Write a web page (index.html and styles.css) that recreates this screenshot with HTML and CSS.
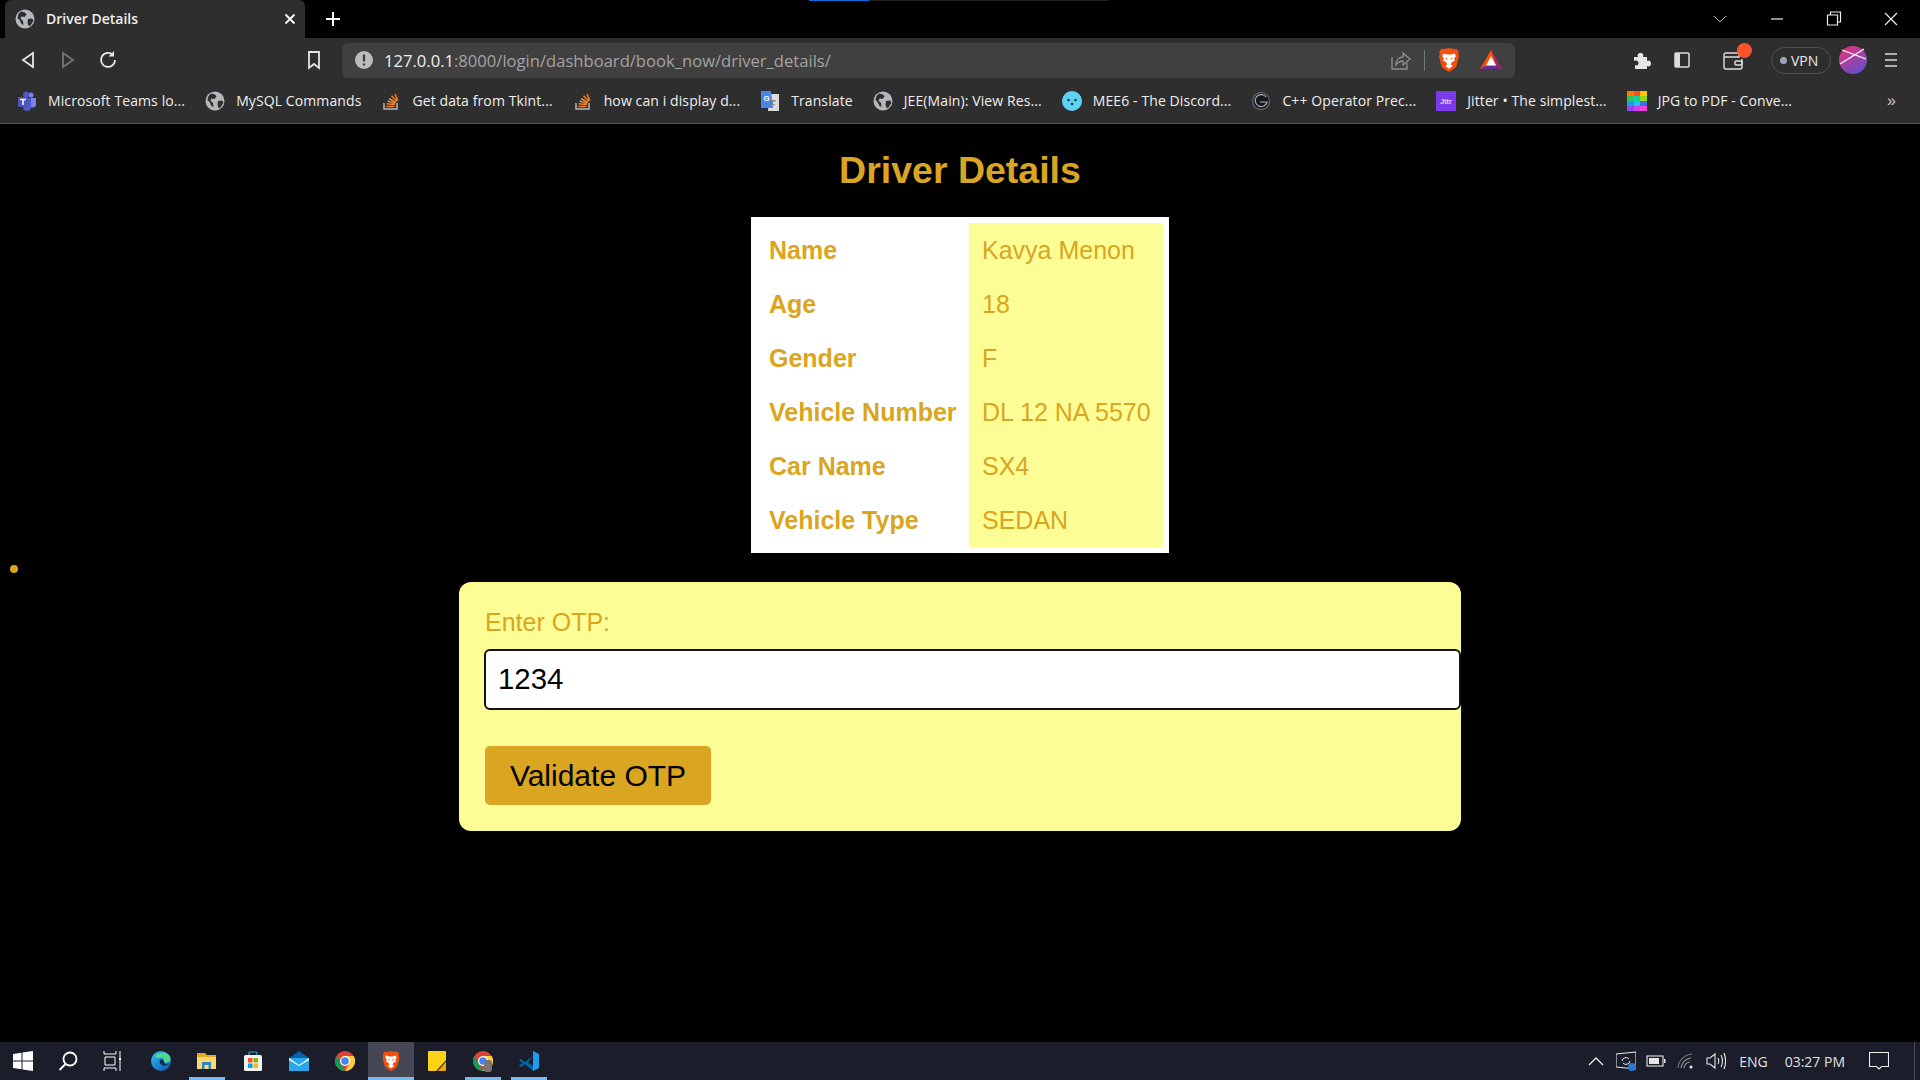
FILE: index.html
```html
<!DOCTYPE html>
<html lang="en">
<head>
    <meta charset="UTF-8">
    <meta name="viewport" content="width=device-width, initial-scale=1.0">
    <title>Driver Details</title>
    <link rel="stylesheet" href="styles.css">
</head>
<body>
    <svg class="defs" width="0" height="0">
        <symbol id="globe" viewBox="0 0 20 20">
            <circle cx="10" cy="10" r="9.5" fill="#b4b7bb"/>
            <path d="M6 2.500l4 1 1.500 2-2 2.500-3-.5-1 2 2.500 2.500.5 4-2-1-2-4-2-2 1-4zM13 10l4-.5 1.500 2-3 5-2 .5-1-3z" fill="#2e2e2e"/>
        </symbol>
        <symbol id="so" viewBox="0 0 20 20">
            <path d="M3 12v6h13v-6" fill="none" stroke="#b8b8b8" stroke-width="1.500"/>
            <path d="M5.500 15.500h8M5.700 12.800l8 .8M6.500 10l7.700 2.200M8 7.500l7 3.800M10.500 4.800l5.500 5.500M14 3l2.800 6.500" fill="none" stroke="#f48024" stroke-width="1.500"/>
        </symbol>
        <symbol id="brave" viewBox="0 0 24 26">
            <path d="M12 0l5 1 3 -.2 3 3.200-1 2 1 3-2.500 9.500c-.5 2-1.500 3-3 4l-4 2.800c-1 .7-2 .7-3 0l-4-2.800c-1.500-1-2.500-2-3-4L1 9l1-3-1-2 3-3.200L7 1z" fill="#f1500f"/>
            <path d="M6 6l4 1h4l4-1 1.500 2.500-2 3 1 2-3.500 2-1 2.500 2 1.500-4 3-4-3 2-1.500-1-2.500-3.500-2 1-2-2-3z" fill="#fff"/>
            <path d="M8 10l2.500 1.500-1 1.500zM16 10l-2.500 1.500 1 1.500z" fill="#f1500f"/>
        </symbol>
        <symbol id="chrome" viewBox="0 0 24 24">
            <circle cx="12" cy="12" r="12" fill="#db4437"/>
            <path d="M12 24A12 12 0 0 1 1.600 6l5.400 9.500 5 8.500z" fill="#0f9d58"/>
            <path d="M12 24a12 12 0 0 0 10.400-18H12l5 9z" fill="#ffcd40"/>
            <circle cx="12" cy="12" r="6" fill="#fff"/>
            <circle cx="12" cy="12" r="4.500" fill="#4285f4"/>
        </symbol>
    </svg>

    <div class="tabstrip">
        <div class="loadbar"><span class="loadbar-done"></span></div>
        <div class="tab">
            <svg class="ico20"><use href="#globe"/></svg>
            <span class="tab-title">Driver Details</span>
            <svg class="tab-close" viewBox="0 0 12 12"><path d="M1.500 1.500l9 9M10.500 1.500l-9 9" stroke="#fff" stroke-width="1.800"/></svg>
        </div>
        <svg class="tab-new" viewBox="0 0 16 16"><path d="M8 1v14M1 8h14" stroke="#fff" stroke-width="2"/></svg>
        <div class="winbtns">
            <svg class="winbtn" viewBox="0 0 46 20"><path d="M17 7l6 6 6-6" fill="none" stroke="#bbb"/></svg>
            <svg class="winbtn" viewBox="0 0 46 20"><path d="M17 10h12" stroke="#eee" stroke-width="1.200"/></svg>
            <svg class="winbtn" viewBox="0 0 46 20"><path d="M16.500 6h10v10h-10zM19.500 6V3h10v10h-3" fill="none" stroke="#eee" stroke-width="1.200"/></svg>
            <svg class="winbtn" viewBox="0 0 46 20"><path d="M17 4l12 12M29 4L17 16" stroke="#eee" stroke-width="1.200"/></svg>
        </div>
    </div>

    <div class="toolbar">
        <svg class="navbtn" viewBox="0 0 40 24"><path d="M25 5L15 12l10 7z" fill="none" stroke="#e6e6e6" stroke-width="1.800"/></svg>
        <svg class="navbtn" viewBox="0 0 40 24"><path d="M15 5l10 7-10 7z" fill="none" stroke="#777" stroke-width="1.800"/></svg>
        <svg class="navbtn" viewBox="0 0 40 24"><path d="M27 12a7 7 0 1 1-2-5" fill="none" stroke="#e6e6e6" stroke-width="1.800"/><path d="M26 3v5.500h-5.500" fill="#e6e6e6"/></svg>
        <svg class="navbtn navbtn-mark" viewBox="0 0 40 24"><path d="M15 4h10v16l-5-4-5 4z" fill="none" stroke="#e6e6e6" stroke-width="1.800"/></svg>
        <div class="address">
            <svg class="ico20 info" viewBox="0 0 20 20"><circle cx="10" cy="10" r="9" fill="#bdbdbd"/><path d="M10 4.500v7M10 13.500v2" stroke="#3e3e3e" stroke-width="2.200"/></svg>
            <span class="url"><span class="url-host">127.0.0.1</span>:8000/login/dashboard/book_now/driver_details/</span>
            <div class="address-end">
                <svg class="share" viewBox="0 0 20 20"><path d="M1 7v12h15v-6" fill="none" stroke="#8f8f8f" stroke-width="1.300"/><path d="M5 15c0-5 3-8 7-8V3l7 6-7 6v-4c-3 0-5 1-7 4z" fill="none" stroke="#8f8f8f" stroke-width="1.300"/></svg>
                <span class="address-sep"></span>
                <svg class="brave-ico"><use href="#brave"/></svg>
                <svg class="bat" viewBox="0 0 24 22">
                    <path d="M12 0L0 21h24z" fill="#ff5000"/>
                    <path d="M12 0l12 21-6-4z" fill="#a0207a"/>
                    <path d="M0 21h24l-6-4H6z" fill="#662d91"/>
                    <path d="M12 7l5.500 10h-11z" fill="#fff"/>
                </svg>
            </div>
        </div>
        <div class="actions">
            <svg class="puzzle" viewBox="0 0 20 20"><path d="M2 7h4c-1-2 0-4 2.500-4S12 5 11 7h4v4c2-1 4 0 4 2.500S17 17 15 16v3H3v-4c2 1 3.500 0 3.500-2S4 10 2 11z" fill="#e6e6e6"/></svg>
            <svg class="sidepanel" viewBox="0 0 16 16"><rect x="1" y="1" width="14" height="14" rx="1" fill="none" stroke="#ddd" stroke-width="1.500"/><rect x="1" y="1" width="5" height="14" fill="#ddd"/></svg>
            <div class="wallet">
                <svg class="wallet-ico" viewBox="0 0 20 18"><path d="M3 1h13v4H1V3a2 2 0 0 1 2-2zM1 5v10a2 2 0 0 0 2 2h14a2 2 0 0 0 2-2V7" fill="none" stroke="#ddd" stroke-width="1.400"/><rect x="12" y="9" width="7" height="4" rx="1" fill="none" stroke="#ddd" stroke-width="1.400"/></svg>
                <span class="wallet-badge"></span>
            </div>
            <div class="vpn"><span class="vpn-dot"></span>VPN</div>
            <svg class="avatar" viewBox="0 0 28 28">
                <defs><linearGradient id="av" x1="0.200" y1="0" x2="0.800" y2="1"><stop offset="0" stop-color="#e8327c"/><stop offset="1" stop-color="#5c50d0"/></linearGradient></defs>
                <circle cx="14" cy="14" r="14" fill="url(#av)"/>
                <path d="M3 4l24 9M1 18L25 3" stroke="#fff" stroke-width="1.300"/>
            </svg>
            <svg class="menu" viewBox="0 0 12 14"><path d="M0 1h12M0 7h12M0 13h12" stroke="#ddd" stroke-width="1.500"/></svg>
        </div>
    </div>

    <div class="bookmarks">
        <a class="bm">
            <svg class="ico20" viewBox="0 0 20 20"><circle cx="14" cy="4" r="2.500" fill="#7b83eb"/><path d="M11 7h8v6a3.500 3.500 0 0 1-7 0z" fill="#7b83eb"/><circle cx="9" cy="3.500" r="3" fill="#5059c9"/><path d="M4 7h10v9a4 4 0 0 1-8 0z" fill="#5059c9"/><rect x="1" y="6" width="10" height="10" rx="1" fill="#4b53bc"/><path d="M3 8.500h6M6 8.500V14" stroke="#fff" stroke-width="1.500"/></svg>
            <span class="bm-label">Microsoft Teams lo...</span>
        </a>
        <a class="bm"><svg class="ico20"><use href="#globe"/></svg><span class="bm-label">MySQL Commands</span></a>
        <a class="bm"><svg class="ico20"><use href="#so"/></svg><span class="bm-label">Get data from Tkint...</span></a>
        <a class="bm"><svg class="ico20"><use href="#so"/></svg><span class="bm-label">how can i display d...</span></a>
        <a class="bm">
            <svg class="ico20" viewBox="0 0 20 20"><path d="M9 3h10v17H8z" fill="#dcdcdc"/><path d="M1 0h10l2 17H1z" fill="#4a86e8"/><path d="M10 10h6M13 9v1c0 2-2 4-3 4M11 11c1 2 3 3 4 3" fill="none" stroke="#777"/><text class="translate-g" x="3.500" y="10">G</text></svg>
            <span class="bm-label">Translate</span>
        </a>
        <a class="bm"><svg class="ico20"><use href="#globe"/></svg><span class="bm-label">JEE(Main): View Res...</span></a>
        <a class="bm">
            <svg class="ico20" viewBox="0 0 20 20"><circle cx="10" cy="10" r="10" fill="#5fd3f5"/><circle cx="6.500" cy="9" r="1.300" fill="#24384a"/><circle cx="13.500" cy="9" r="1.300" fill="#24384a"/><circle cx="10" cy="13" r="1.300" fill="#24384a"/></svg>
            <span class="bm-label">MEE6 - The Discord...</span>
        </a>
        <a class="bm">
            <svg class="ico20" viewBox="0 0 20 20"><circle cx="10" cy="10" r="8.500" fill="#16181d" stroke="#5a6068" stroke-width="1.500"/><path d="M15 6a6 6 0 1 0 1 5H9" fill="none" stroke="#aab" stroke-width="1.200"/></svg>
            <span class="bm-label">C++ Operator Prec...</span>
        </a>
        <a class="bm">
            <svg class="ico20" viewBox="0 0 20 20"><rect width="20" height="20" fill="#7a3bed"/><text class="jitter-t" x="10" y="12.500">Jttr</text></svg>
            <span class="bm-label">Jitter • The simplest...</span>
        </a>
        <a class="bm">
            <svg class="ico20" viewBox="0 0 20 20">
                <rect width="7" height="5" fill="#ff7a00"/><rect x="7" width="6" height="5" fill="#ff4d1c"/><rect x="13" width="7" height="5" fill="#ffc800"/>
                <rect y="5" width="7" height="5" fill="#2fc85a"/><rect x="7" y="5" width="6" height="5" fill="#11cfa0"/><rect x="13" y="5" width="7" height="5" fill="#8ed81e"/>
                <rect y="10" width="7" height="5" fill="#1e9bf0"/><rect x="7" y="10" width="6" height="5" fill="#18c8e8"/><rect x="13" y="10" width="7" height="5" fill="#3a70f0"/>
                <rect y="15" width="7" height="5" fill="#8f45f0"/><rect x="7" y="15" width="6" height="5" fill="#d040f0"/><rect x="13" y="15" width="7" height="5" fill="#f040e0"/>
            </svg>
            <span class="bm-label">JPG to PDF - Conve...</span>
        </a>
        <span class="bm-more">»</span>
    </div>

    <main class="page">
        <span class="stray-dot"></span>
        <h1>Driver Details</h1>
        <table class="details">
            <tr><th>Name</th><td>Kavya Menon</td></tr>
            <tr><th>Age</th><td>18</td></tr>
            <tr><th>Gender</th><td>F</td></tr>
            <tr><th>Vehicle Number</th><td>DL 12 NA 5570</td></tr>
            <tr><th>Car Name</th><td>SX4</td></tr>
            <tr><th>Vehicle Type</th><td>SEDAN</td></tr>
        </table>
        <form class="otp-form">
            <label for="otp">Enter OTP:</label>
            <input type="text" id="otp" value="1234">
            <button type="button">Validate OTP</button>
        </form>
    </main>

    <div class="taskbar">
        <div class="task task-sys"><svg class="task-ico" viewBox="0 0 20 20"><path d="M0 3l8.500-1.200v7.700H0zM9.500 1.600L20 0v9.500H9.500zM0 10.500h8.500v7.700L0 17zM9.500 10.500H20V20L9.500 18.400z" fill="#fff"/></svg></div>
        <div class="task task-sys"><svg class="task-ico" viewBox="0 0 20 20"><circle cx="12" cy="8" r="6.500" fill="none" stroke="#fff" stroke-width="1.800"/><path d="M7.500 13L1.500 19" stroke="#fff" stroke-width="2"/></svg></div>
        <div class="task task-sys"><svg class="task-ico" viewBox="0 0 20 20"><path d="M1 0v3h12V0M1 20v-3h12v3M2 6h10v8H2zM17 0v6M17 9v11" fill="none" stroke="#fff"/><rect x="16" y="6.500" width="2" height="2.500" fill="#fff"/></svg></div>
        <div class="task task-first">
            <svg class="task-ico" viewBox="0 0 20 20">
                <defs><linearGradient id="edge" x1="0" y1="0" x2="1" y2="1"><stop offset="0" stop-color="#35c1f1"/><stop offset=".6" stop-color="#1b7fd0"/><stop offset="1" stop-color="#0c59a4"/></linearGradient></defs>
                <circle cx="10" cy="10" r="10" fill="url(#edge)"/>
                <path d="M4 5c3-4 10-5 14-1 2 2 2 6 0 7-2 1-4 1-5 0 1-3-2-5-4-4-2 0-4 1-5-2z" fill="#4fd88c"/>
                <path d="M9 9c2-1 4 0 4 2s2 3 5 2c-2 2-5 2-7 1s-3-3-2-5z" fill="#0c2a52"/>
            </svg>
        </div>
        <div class="task task-open">
            <svg class="task-ico" viewBox="0 0 20 20"><path d="M0 2h8l2 2h9v14H0z" fill="#e7a921"/><path d="M0 6h19v12H0z" fill="#ffd768"/><path d="M5 18v-7h9v7h-2.500v-4h-4v4z" fill="#2f84c8"/></svg>
        </div>
        <div class="task">
            <svg class="task-ico" viewBox="0 0 20 20"><path d="M6 4V2a1 1 0 0 1 1-1h6a1 1 0 0 1 1 1v2" fill="none" stroke="#2aa3e0" stroke-width="1.200"/><rect x="1" y="4" width="18" height="16" rx="1.500" fill="#f3f3f3"/><rect x="5" y="7" width="4.500" height="4.500" fill="#f25022"/><rect x="10.500" y="7" width="4.500" height="4.500" fill="#7fba00"/><rect x="5" y="12.500" width="4.500" height="4.500" fill="#00a4ef"/><rect x="10.500" y="12.500" width="4.500" height="4.500" fill="#ffb900"/></svg>
        </div>
        <div class="task">
            <svg class="task-ico" viewBox="0 0 20 20"><path d="M0 7l10-7 10 7v13H0z" fill="#0a5fb0"/><path d="M0 7h20v13H0z" fill="#28a8ea"/><path d="M0 7l10 7 10-7v2l-10 6L0 9z" fill="#fff"/></svg>
        </div>
        <div class="task"><svg class="task-ico"><use href="#chrome"/></svg></div>
        <div class="task task-active"><svg class="task-ico"><use href="#brave"/></svg></div>
        <div class="task">
            <svg class="task-ico" viewBox="0 0 20 20"><rect x="1" width="18" height="20" rx="1" fill="#fcd116"/><path d="M19 9v9a2 2 0 0 1-2 2H9z" fill="#4a4a3a"/><path d="M19 11v7a2 2 0 0 1-2 2h-6z" fill="#f2a900"/></svg>
        </div>
        <div class="task task-open">
            <svg class="task-ico"><use href="#chrome"/></svg>
            <span class="task-user"></span>
        </div>
        <div class="task task-open">
            <svg class="task-ico" viewBox="0 0 20 20"><path d="M14 0l6 3v14l-6 3z" fill="#1f9cf0"/><path d="M14 0v5L6 11 2 8 0 9.500 3.500 12 0 14.500 2 16l4-3 8 7 0-5-5-3.500L14 5" fill="#0065a9"/></svg>
        </div>
        <div class="tray">
            <svg class="tray-ico" viewBox="0 0 20 20"><path d="M3 14l7-7 7 7" fill="none" stroke="#e8e8e8" stroke-width="1.300"/></svg>
            <svg class="tray-ico tray-sync" viewBox="0 0 20 20"><path d="M0 3l20-2v17l-20-2z" fill="none" stroke="#e8e8e8" stroke-width="1.100"/><path d="M6 10a4 4 0 0 1 7-2M14 10a4 4 0 0 1-7 2" fill="none" stroke="#e8e8e8"/><circle cx="16" cy="16" r="4" fill="#2b78d0"/></svg>
            <svg class="tray-ico" viewBox="0 0 20 20"><rect x="1" y="5" width="16" height="10" fill="none" stroke="#e8e8e8" stroke-width="1.100"/><rect x="3" y="7" width="10" height="6" fill="#e8e8e8"/><rect x="18" y="8" width="1.500" height="4" fill="#e8e8e8"/></svg>
            <svg class="tray-ico" viewBox="0 0 20 20"><path d="M2 17a15 15 0 0 1 14-14" fill="none" stroke="#777" stroke-width="1.100"/><path d="M5 17a11 11 0 0 1 10-10M8 17a7 7 0 0 1 6-6" fill="none" stroke="#999" stroke-width="1.100"/><circle cx="15" cy="16" r="1.500" fill="#e8e8e8"/></svg>
            <svg class="tray-ico" viewBox="0 0 20 20"><path d="M1 7h3l5-4v14l-5-4H1z" fill="none" stroke="#e8e8e8" stroke-width="1.100"/><path d="M12 7c1 2 1 4 0 6M15 4c2 4 2 8 0 12M18 2c2 5 2 11 0 16" fill="none" stroke="#e8e8e8" stroke-width="1.100"/></svg>
            <span class="tray-lang">ENG</span>
            <span class="tray-time">03:27 PM</span>
            <svg class="tray-note" viewBox="0 0 20 20"><path d="M.5 1.500h19v14h-7l-2.500 2.500-2.500-2.500h-7z" fill="none" stroke="#f0f0f0" stroke-width="1.100"/></svg>
            <span class="tray-edge"></span>
        </div>
    </div>
</body>
</html>
```

FILE: styles.css
```css
* {
    box-sizing: border-box;
}
html, body {
    height: 100%;
}
body {
    margin: 0;
    display: flex;
    flex-direction: column;
    overflow: hidden;
    background-color: #000;
    font-family: "Liberation Sans", Arial, sans-serif;
}
svg {
    display: block;
    flex: none;
}
.defs {
    position: absolute;
}
.ico20 {
    width: 20px;
    height: 20px;
}

/* browser chrome */
.tabstrip {
    position: relative;
    height: 38px;
    display: flex;
    align-items: center;
    background-color: #000;
}
.loadbar {
    position: absolute;
    top: 0;
    left: 809px;
    width: 300px;
    height: 1px;
    background-color: #222;
}
.loadbar-done {
    display: block;
    width: 60px;
    height: 1px;
    background-color: #0a6fd8;
}
.tab {
    height: 38px;
    width: 300px;
    margin-left: 5px;
    padding: 0 10px 0 10px;
    display: flex;
    align-items: center;
    background-color: #2e2e2e;
    border-radius: 6px 6px 0 0;
}
.tab-title {
    margin-left: 11px;
    margin-top: -1px;
    flex: 1;
    color: #eee;
    font-family: "Open Sans", sans-serif;
    font-size: 14px;
    font-weight: 600;
}
.tab-close {
    width: 12px;
    height: 12px;
    margin-right: -1px;
}
.tab-new {
    width: 16px;
    height: 16px;
    margin-left: 20px;
}
.winbtns {
    margin-left: auto;
    margin-right: 6px;
    display: flex;
    gap: 11px;
}
.winbtn {
    width: 46px;
    height: 20px;
}
.toolbar {
    height: 47px;
    padding: 3px 0 6px 8px;
    display: flex;
    align-items: center;
    background-color: #2e2e2e;
}
.navbtn {
    width: 40px;
    height: 24px;
}
.navbtn-mark {
    margin-left: 166px;
    margin-right: 8px;
}
.address {
    width: 1173px;
    height: 35px;
    padding: 0 13px 0 12px;
    display: flex;
    align-items: center;
    background-color: #404040;
    border-radius: 6px;
}
.url {
    margin-left: 10px;
    color: #a3a3a3;
    font-family: "Open Sans", sans-serif;
    font-size: 16.600px;
}
.url-host {
    color: #eee;
}
.address-end {
    margin-left: auto;
    display: flex;
    align-items: center;
}
.share {
    width: 20px;
    height: 20px;
}
.address-sep {
    width: 1px;
    height: 21px;
    margin: 0 13px 0 13px;
    background-color: #777;
}
.brave-ico {
    width: 22px;
    height: 24px;
}
.bat {
    width: 22px;
    height: 20px;
    margin-left: 20px;
}
.actions {
    margin-left: 117px;
    flex: 1;
    display: flex;
    align-items: center;
}
.puzzle {
    width: 20px;
    height: 20px;
}
.sidepanel {
    width: 16px;
    height: 16px;
    margin-left: 22px;
}
.wallet {
    position: relative;
    margin-left: 33px;
}
.wallet-ico {
    width: 20px;
    height: 18px;
    margin-top: 2px;
}
.wallet-badge {
    position: absolute;
    top: -7px;
    left: 14px;
    width: 15px;
    height: 15px;
    background-color: #fb542b;
    border-radius: 50%;
}
.vpn {
    width: 60px;
    height: 27px;
    margin-left: 28px;
    padding-left: 8px;
    display: flex;
    align-items: center;
    color: #e8e8e8;
    font-family: "Open Sans", sans-serif;
    font-size: 14px;
    border: 1.500px solid #4b5160;
    border-radius: 14px;
}
.vpn-dot {
    width: 7px;
    height: 7px;
    margin-right: 4px;
    background-color: #a0a4b4;
    border-radius: 50%;
}
.avatar {
    width: 28px;
    height: 28px;
    margin-left: 8px;
}
.menu {
    width: 12px;
    height: 14px;
    margin-left: 18px;
}
.bookmarks {
    height: 39px;
    padding: 0 0 7px 17px;
    display: flex;
    align-items: center;
    background-color: #2e2e2e;
    border-bottom: 1px solid #555;
}
.bm {
    margin-right: 20px;
    display: flex;
    align-items: center;
    gap: 11px;
    color: #eee;
    font-family: "Open Sans", sans-serif;
    font-size: 14px;
    letter-spacing: 0.1px;
    white-space: nowrap;
}
.bm-more {
    margin-left: auto;
    margin-right: 24px;
    color: #ccc;
    font-size: 16px;
}
.translate-g {
    fill: #fff;
    font-family: "Liberation Sans", sans-serif;
    font-size: 8px;
    font-weight: bold;
}
.jitter-t {
    fill: #e6dcff;
    font-family: "Liberation Sans", sans-serif;
    font-size: 7px;
    font-weight: bold;
    text-anchor: middle;
}

/* the page itself */
.page {
    position: relative;
    flex: 1;
    display: flex;
    flex-direction: column;
    align-items: center;
    background-color: #000;
}
.stray-dot {
    position: absolute;
    top: 441px;
    left: 10px;
    width: 8px;
    height: 8px;
    background-color: #daa520;
    border-radius: 50%;
}
h1 {
    margin: 25px 0 25px;
    color: #daa520;
    font-size: 37.500px;
    line-height: 43px;
    font-weight: bold;
}
.details {
    width: 418px;
    padding: 6px;
    border-spacing: 0;
    background-color: #fff;
    color: #daa520;
    font-size: 25px;
}
.details th {
    width: 212px;
    height: 54px;
    padding: 1px 12px 0 12px;
    text-align: left;
}
.details td {
    padding: 1px 12px 0 13px;
    background-color: #fdfd96;
}
.otp-form {
    width: 1002px;
    height: 249px;
    margin-top: 29px;
    padding: 26px 0 26px 26px;
    background-color: #fdfd96;
    border-radius: 12px;
}
.otp-form label {
    display: block;
    margin-bottom: 13px;
    color: #daa520;
    font-size: 25px;
    line-height: 28px;
}
.otp-form input {
    display: block;
    width: 977px;
    height: 61px;
    margin-left: -1px;
    padding: 0 12px 2px;
    color: #000;
    font-family: "Liberation Sans", Arial, sans-serif;
    font-size: 29.400px;
    background-color: #fff;
    border: 2px solid #111;
    border-radius: 6px;
}
.otp-form button {
    width: 226px;
    height: 59px;
    margin-top: 36px;
    color: #000;
    font-family: "Liberation Sans", Arial, sans-serif;
    font-size: 30px;
    background-color: #daa520;
    border: none;
    border-radius: 5px;
}

/* windows taskbar */
.taskbar {
    height: 38px;
    display: flex;
    background-color: #1b1d2b;
}
.task {
    position: relative;
    width: 46px;
    height: 38px;
    display: flex;
    align-items: center;
    justify-content: center;
}
.task-sys {
    width: 45px;
}
.task-first {
    margin-left: 3px;
}
.task-ico {
    width: 20px;
    height: 20px;
}
.task-open::after, .task-active::after {
    content: "";
    position: absolute;
    left: 5px;
    right: 5px;
    bottom: 0;
    height: 3px;
    background-color: #76b9ed;
}
.task-active {
    background-color: #454754;
}
.task-active::after {
    left: 0;
    right: 0;
}
.task-user {
    position: absolute;
    left: 24px;
    top: 18px;
    width: 8px;
    height: 12px;
    background-color: #777;
    border-radius: 3px;
}
.tray {
    margin-left: auto;
    padding-right: 5px;
    display: flex;
    align-items: center;
    color: #e0e0e0;
    font-family: "Open Sans", sans-serif;
    font-size: 14px;
}
.tray-ico {
    width: 20px;
    height: 20px;
    margin-right: 10px;
}
.tray-lang {
    margin-left: 3px;
}
.tray-time {
    margin-left: 17px;
}
.tray-note {
    width: 20px;
    height: 20px;
    margin-left: 24px;
}
.tray-edge {
    width: 1px;
    height: 38px;
    margin-left: 25px;
    background-color: #4a4c58;
}
```
